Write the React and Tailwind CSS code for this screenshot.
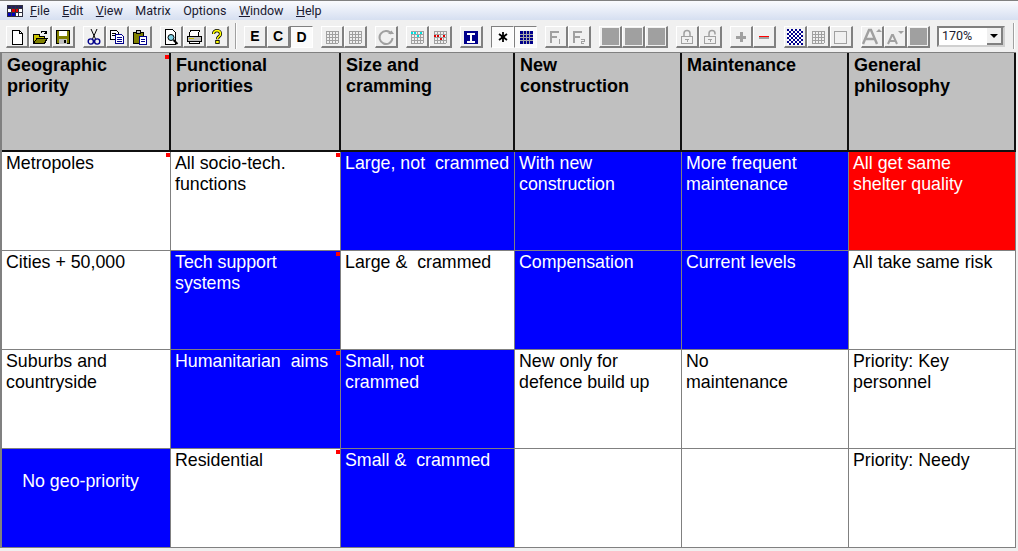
const menus = [
  ['F', 'ile'],
  ['E', 'dit'],
  ['V', 'iew'],
  ['', 'Matrix'],
  ['', 'Options'],
  ['W', 'indow'],
  ['H', 'elp'],
];

const G = '#a0a0a0';

function Svg({ children }) {
  return (
    <svg width="16" height="16" viewBox="0 0 16 16" shapeRendering="crispEdges" fill="none">
      {children}
    </svg>
  );
}

function GridLines({ color = G }) {
  const lines = [];
  for (let i = 2; i <= 14; i += 3) {
    lines.push(<path key={'h' + i} d={`M2 ${i}H14`} stroke={color} />);
    lines.push(<path key={'v' + i} d={`M${i} 2V14`} stroke={color} />);
  }
  return <>{lines}</>;
}

function Dots({ color, cells }) {
  return (
    <>
      {cells.map(([x, y]) => (
        <rect key={x + '-' + y} x={x} y={y} width="2" height="2" fill={color} />
      ))}
    </>
  );
}

const icons = {
  new: (
    <Svg>
      <path d="M3.5 1.5H10.5L13.5 4.5V15.5H3.5Z" fill="#fff" stroke="#000" />
      <path d="M10.5 1.5V4.5H13.5" stroke="#000" />
    </Svg>
  ),
  open: (
    <Svg>
      <path d="M1.5 14.5V5.5H7.5V7.5H12.5V14.5Z" fill="#c8c000" stroke="#000" />
      <path d="M1.5 14.5L5 9.5H15L12.5 14.5Z" fill="#808000" stroke="#000" />
      <path d="M9 3.5C10.5 1.5 12.5 1.5 14 3.5M14 1.5V4H11.5" stroke="#000" />
    </Svg>
  ),
  save: (
    <Svg>
      <path d="M1.5 1.5H14.5V14.5H1.5Z" fill="#808000" stroke="#000" />
      <rect x="4" y="2" width="8" height="5" fill="#fff" />
      <rect x="4" y="10" width="8" height="5" fill="#c0c0c0" />
      <rect x="9" y="11" width="2" height="3" fill="#000" />
    </Svg>
  ),
  cut: (
    <svg width="16" height="18" viewBox="0 0 16 18" fill="none">
      <path d="M5 1L9.5 11M11 1L6.5 11" stroke="#000" />
      <circle cx="4.8" cy="13.5" r="2.6" stroke="#00008b" strokeWidth="1.4" />
      <circle cx="11.2" cy="13.5" r="2.6" stroke="#00008b" strokeWidth="1.4" />
    </svg>
  ),
  copy: (
    <Svg>
      <path d="M1.5 1.5H7.5L9.5 3.5V10.5H1.5Z" fill="#fff" stroke="#000" />
      <path d="M3 4.5H7M3 6.5H7" stroke="#000" />
      <path d="M6.5 5.5H12.5L14.5 7.5V14.5H6.5Z" fill="#fff" stroke="#00008b" />
      <path d="M8 8.5H13M8 10.5H13M8 12.5H13" stroke="#00008b" />
    </Svg>
  ),
  paste: (
    <Svg>
      <path d="M1.5 3.5H11.5V14.5H1.5Z" fill="#808000" stroke="#000" />
      <path d="M4.5 1.5H8.5V4.5H4.5Z" fill="#c0c0c0" stroke="#000" />
      <path d="M7.5 7.5H14.5V15.5H7.5Z" fill="#fff" stroke="#00008b" />
      <path d="M9 10.5H13M9 12.5H13" stroke="#00008b" />
    </Svg>
  ),
  preview: (
    <Svg>
      <path d="M2.5 0.5H9.5L12.5 3.5V15.5H2.5Z" fill="#fff" stroke="#000" />
      <circle cx="8" cy="8.5" r="3" fill="#7fd4e8" stroke="#000" shapeRendering="auto" />
      <path d="M10.5 11L14.5 15" stroke="#000" strokeWidth="2" shapeRendering="auto" />
    </Svg>
  ),
  print: (
    <Svg>
      <path d="M4.5 1.5H13.5L12 7H3Z" fill="#fff" stroke="#000" />
      <path d="M1.5 7.5H15.5V12.5H1.5Z" fill="#c0c0c0" stroke="#000" />
      <rect x="3" y="9" width="5" height="1" fill="#c8c000" />
      <path d="M3.5 12.5H13.5V14.5H3.5Z" fill="#fff" stroke="#000" />
    </Svg>
  ),
  help: (
    <svg width="14" height="17" viewBox="0 0 16 18" fill="none">
      <path d="M4 6C4 1 12 1 12 6C12 9 8.5 9 8.5 12" stroke="#000" strokeWidth="3.6" />
      <path d="M4 6C4 1 12 1 12 6C12 9 8.5 9 8.5 12" stroke="#ffff00" strokeWidth="1.8" />
      <rect x="6.5" y="13.5" width="4" height="3.5" fill="#ffff00" stroke="#000" />
    </svg>
  ),
  grid: (
    <Svg>
      <GridLines />
    </Svg>
  ),
  refresh: (
    <svg width="18" height="18" viewBox="0 0 18 18" fill="none">
      <path d="M14.5 6A6.5 6.5 0 1 0 15.5 10" stroke={G} strokeWidth="2" />
      <path d="M11 6H17L14.5 2.5Z" fill={G} />
    </svg>
  ),
  gridCyan: (
    <Svg>
      <GridLines />
      <Dots color="#00e0e0" cells={[[2, 3], [5, 3], [11, 3], [8, 6]]} />
    </Svg>
  ),
  gridRed: (
    <Svg>
      <GridLines />
      <Dots color="#e00000" cells={[[2, 6], [5, 6], [11, 6], [8, 9]]} />
    </Svg>
  ),
  info: (
    <Svg>
      <rect x="1" y="2" width="14" height="13" fill="#00008b" />
      <path d="M4 4.5H12M8 4.5V12.5M4 12.5H12" stroke="#fff" strokeWidth="2" />
    </Svg>
  ),
  star: (
    <svg width="12" height="12" viewBox="0 0 12 12" fill="none">
      <path d="M6 1V11M2 3L10 9M10 3L2 9" stroke="#000" strokeWidth="1.8" />
      <rect x="4" y="4" width="4" height="4" fill="#000" />
    </svg>
  ),
  gridBlue: (
    <Svg>
      <rect x="2" y="2" width="13" height="13" fill="#00008b" />
      <path d="M5.5 2V15M8.5 2V15M11.5 2V15M2 5.5H15M2 8.5H15M2 11.5H15" stroke="#a8a8a8" />
    </Svg>
  ),
  f1: (
    <Svg>
      <path d="M3 14V2.5H11M3 7.5H9" stroke={G} strokeWidth="2" />
      <path d="M11 10V15" stroke={G} />
    </Svg>
  ),
  f2: (
    <Svg>
      <path d="M3 14V2.5H11M3 7.5H9" stroke={G} strokeWidth="2" />
      <path d="M10 10.5H13V12.5H10V14.5H13" stroke={G} />
    </Svg>
  ),
  square: (
    <svg width="17" height="17" viewBox="0 0 17 17">
      <rect width="17" height="17" fill={G} />
    </svg>
  ),
  lock: (
    <Svg>
      <path d="M5 7V4.5A3 3 0 0 1 11 4.5V7" stroke={G} strokeWidth="1.5" shapeRendering="auto" />
      <rect x="2.5" y="7.5" width="11" height="7" fill="#f0f0f0" stroke={G} />
      <path d="M6 10H10M8 10V13" stroke={G} />
    </Svg>
  ),
  unlock: (
    <Svg>
      <path d="M7 7V4.5A3 3 0 0 1 13 4.5V5.5" stroke={G} strokeWidth="1.5" shapeRendering="auto" />
      <rect x="2.5" y="7.5" width="11" height="7" fill="#f0f0f0" stroke={G} />
      <path d="M6 10H10M8 10V13" stroke={G} />
    </Svg>
  ),
  plus: (
    <Svg>
      <path d="M8 3V13M3 8H13" stroke={G} strokeWidth="3" />
    </Svg>
  ),
  minus: (
    <Svg>
      <rect x="3" y="6.5" width="10" height="1.5" fill="#ff0000" />
      <rect x="3" y="8" width="10" height="1.5" fill={G} />
    </Svg>
  ),
  checker: (
    <svg width="16" height="16" viewBox="0 0 16 16" shapeRendering="crispEdges">
      <defs>
        <pattern id="chk" width="4" height="4" patternUnits="userSpaceOnUse">
          <rect width="4" height="4" fill="#fff" />
          <rect width="2" height="2" fill="#00008b" />
          <rect x="2" y="2" width="2" height="2" fill="#00008b" />
        </pattern>
      </defs>
      <rect width="16" height="16" fill="url(#chk)" />
    </svg>
  ),
  box: (
    <Svg>
      <rect x="1.5" y="2.5" width="12" height="12" stroke={G} />
    </Svg>
  ),
  fontUp: (
    <svg width="20" height="18" viewBox="0 0 20 18" fill="none">
      <path d="M1 16L7 2H9L15 16M4 11H12" stroke={G} strokeWidth="2.4" />
      <path d="M14 4H20L17 1Z" fill={G} />
    </svg>
  ),
  fontDown: (
    <svg width="18" height="16" viewBox="0 0 18 16" fill="none">
      <path d="M2 15L6 6H7L11 15M4 12H9" stroke={G} strokeWidth="2" />
      <path d="M12 2H18L15 5Z" fill={G} />
    </svg>
  ),
};

const toolbarGroups = [
  [{ i: 'new' }, { i: 'open' }, { i: 'save' }],
  [{ i: 'cut' }, { i: 'copy' }, { i: 'paste' }],
  [{ i: 'preview' }, { i: 'print' }, { i: 'help' }],
  'sep',
  [{ t: 'E' }, { t: 'C' }, { t: 'D', on: true }],
  [{ i: 'grid' }, { i: 'grid' }],
  [{ i: 'refresh' }],
  [{ i: 'gridCyan' }, { i: 'gridRed' }],
  [{ i: 'info' }],
  [{ i: 'star', on: true }, { i: 'gridBlue', on: true }],
  [{ i: 'f1' }, { i: 'f2' }],
  [{ i: 'square' }, { i: 'square' }, { i: 'square' }],
  [{ i: 'lock' }, { i: 'unlock' }],
  [{ i: 'plus' }, { i: 'minus' }],
  [{ i: 'checker' }, { i: 'grid' }, { i: 'box' }],
  [{ i: 'fontUp' }, { i: 'fontDown' }, { i: 'square' }],
];

function ToolButton({ icon, text, on }) {
  return (
    <div
      className={
        'w-[23px] h-[22px] flex items-center justify-center box-border ' +
        (on
          ? 'bg-[#fbfbfb] border border-t-[#808080] border-l-[#808080] border-r-white border-b-white'
          : 'bg-[#f0f0f0] border-t border-l border-r-2 border-b-2 border-t-white border-l-white border-r-[#808080] border-b-[#808080]')
      }
    >
      {text ? <span className="text-[14px] font-bold text-black">{text}</span> : icons[icon]}
    </div>
  );
}

const headers = [
  'Geographic\npriority',
  'Functional\npriorities',
  'Size and\ncramming',
  'New\nconstruction',
  'Maintenance',
  'General\nphilosophy',
];

const colClass = ['w-[169px]', 'w-[170px]', 'w-[174px]', 'w-[167px]', 'w-[167px]', 'w-[167px]'];

// b = blue, r = red, m = little red marker in the corner
const rows = [
  [
    { t: 'Metropoles', m: true },
    { t: 'All socio-tech.\nfunctions', m: true },
    { t: 'Large, not  crammed', b: true },
    { t: 'With new\nconstruction', b: true },
    { t: 'More frequent\nmaintenance', b: true },
    { t: 'All get same\nshelter quality', r: true },
  ],
  [
    { t: 'Cities + 50,000' },
    { t: 'Tech support\nsystems', b: true, m: true },
    { t: 'Large &  crammed' },
    { t: 'Compensation', b: true },
    { t: 'Current levels', b: true },
    { t: 'All take same risk' },
  ],
  [
    { t: 'Suburbs and\ncountryside' },
    { t: 'Humanitarian  aims', b: true, m: true },
    { t: 'Small, not\ncrammed', b: true },
    { t: 'New only for\ndefence build up' },
    { t: 'No\nmaintenance' },
    { t: 'Priority: Key\npersonnel' },
  ],
  [
    { t: 'No geo-priority', b: true, center: true },
    { t: 'Residential', m: true },
    { t: 'Small &  crammed', b: true },
    { t: '' },
    { t: '' },
    { t: 'Priority: Needy' },
  ],
];

function Marker({ top }) {
  return <div className={'absolute right-0 w-[4px] h-[4px] bg-[#ff0000] ' + top} />;
}

export default function App() {
  return (
    <div
      className="w-[1018px] h-[551px] overflow-hidden bg-[#f0f0f0] text-black"
      style={{ fontFamily: '"Liberation Sans", Arial, sans-serif' }}
    >
      {/* menu bar */}
      <div className="h-[20px] border-t border-t-[#808080] bg-gradient-to-b from-[#fafbfe] to-[#d6dff1] flex items-center">
        <div className="ml-[7px] w-[16px] h-[12px] grid grid-cols-4 gap-px bg-[#303040] p-px">
          <div className="bg-[#202060]" />
          <div className="bg-[#202060]" />
          <div className="bg-[#202060]" />
          <div className="bg-[#202060]" />
          <div className="bg-white" />
          <div className="bg-[#e00000]" />
          <div className="bg-[#e00000]" />
          <div className="bg-white" />
          <div className="bg-[#0000c0]" />
          <div className="bg-[#0000c0]" />
          <div className="bg-white" />
          <div className="bg-white" />
        </div>
        <div
          className="ml-[7px] pt-px flex gap-[12.5px] text-[12.5px] text-[#1a1a30]"
          style={{ fontFamily: 'Roboto, sans-serif' }}
        >
          {menus.map(([u, rest]) => (
            <span key={rest}>
              {u && <span className="underline">{u}</span>}
              {rest}
            </span>
          ))}
        </div>
      </div>

      {/* toolbar */}
      <div className="h-[32px] pt-[6px] pl-[6px] flex items-start gap-[8px]">
        {toolbarGroups.map((group, gi) =>
          group === 'sep' ? (
            <div key={gi} className="w-[2px] h-[26px] -mt-[3px] -ml-[2px] -mr-[1px] border-l border-l-[#a0a0a0] border-r border-r-white" />
          ) : (
            <div key={gi} className="flex">
              {group.map((b, i) => (
                <ToolButton key={i} icon={b.i} text={b.t} on={b.on} />
              ))}
            </div>
          )
        )}
        <div className="flex items-center w-[68px] h-[21px] -ml-[1px] bg-white border-2 border-t-[#808080] border-l-[#808080] border-r-[#d0d0d0] border-b-[#d0d0d0] box-border">
          <span className="ml-[3px] flex-1 text-[12.5px] text-[#1a1a30]" style={{ fontFamily: 'Roboto, sans-serif' }}>170%</span>
          <div className="w-[16px] h-[17px] flex items-center justify-center bg-[#f0f0f0] border-r-2 border-b-2 border-r-[#808080] border-b-[#808080]">
            <div className="w-0 h-0 border-l-[4px] border-r-[4px] border-t-[4px] border-l-transparent border-r-transparent border-t-black" />
          </div>
        </div>
        <div className="w-[2px] h-[26px] -mt-[3px] border-l border-l-[#a0a0a0] border-r border-r-white" />
      </div>

      {/* matrix */}
      <div className="w-[1016px] border-l-2 border-l-[#808080] border-t border-t-[#808080]">
        <div className="flex h-[99px] bg-[#c0c0c0] border-b-2 border-b-[#101010]">
          {headers.map((h, i) => (
            <div
              key={h}
              className={colClass[i] + ' relative box-border border-r-2 border-r-[#101010] pl-[5px] pt-[2px] text-[18px] leading-[21px] font-bold whitespace-pre-wrap'}
            >
              {h}
              {i === 0 && <Marker top="top-[2px]" />}
            </div>
          ))}
        </div>
        {rows.map((row, ri) => (
          <div key={ri} className="flex h-[99px] border-b border-b-[#808080]">
            {row.map((c, i) => (
              <div
                key={i}
                className={
                  colClass[i] +
                  ' relative box-border border-r border-r-[#808080] text-[17.8px] leading-[21px] whitespace-pre-wrap ' +
                  (c.center ? 'pt-[22px] pr-[11px] text-center ' : 'pl-[4px] pt-px ') +
                  (c.b ? 'bg-[#0000ff] text-white' : c.r ? 'bg-[#ff0000] text-white' : 'bg-white text-black')
                }
              >
                {c.t}
                {c.m && <Marker top="top-px" />}
              </div>
            ))}
          </div>
        ))}
      </div>
    </div>
  );
}
